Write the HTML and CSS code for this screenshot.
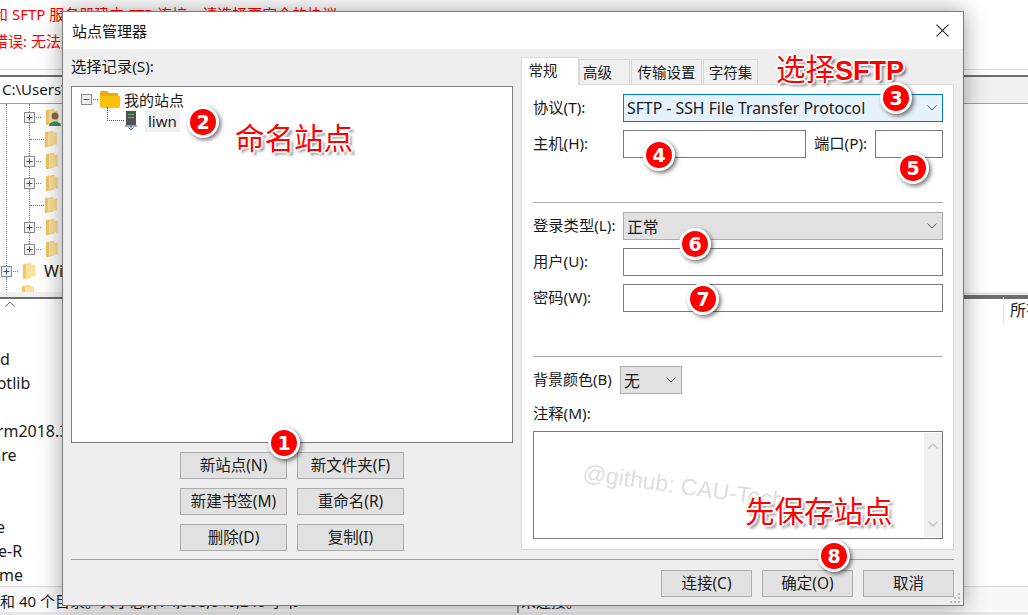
FILE: index.html
```html
<!DOCTYPE html>
<html lang="zh-CN">
<head>
    <meta charset="UTF-8">
    <meta name="viewport" content="width=device-width, initial-scale=1.0">
    <title>站点管理器</title>
    <link rel="stylesheet" href="styles.css">
</head>
<body>

<svg class="defs" width="0" height="0">
    <symbol id="folder-closed" viewBox="0 0 13 18">
        <path d="M0 2 L9 0 L9 16 L1 18 L0 17 Z" fill="#f6d67e"/>
        <path d="M3 2 H13 V15 H3 Z" fill="#fbe09a"/>
        <path d="M0 2 L3 1 L3 16 L1 18 L0 17 Z" fill="#efc564"/>
    </symbol>
    <symbol id="plus-box" viewBox="0 0 11 11">
        <rect x=".5" y=".5" width="10" height="10" fill="#f1f1f1" stroke="#8a8a8a"/>
        <path d="M2.5 5.5 H8.5 M5.5 2.5 V8.5" stroke="#2f4f9a" fill="none"/>
    </symbol>
    <symbol id="chevron" viewBox="0 0 10 6">
        <path d="M.5 .5 L5 5 L9.5 .5" fill="none" stroke="#555"/>
    </symbol>
</svg>

<div class="screen">

    <!-- main window behind the dialog -->
    <div class="log">
        <p>和 SFTP 服务器建立 FTP 连接，请选择更安全的协议</p>
        <p class="log-second">错误: 无法连接到服务器</p>
    </div>
    <div class="addressbar"><span class="path">C:\Users\</span></div>

    <div class="tree-behind">
        <div class="row lvl2">
            <svg class="plus"><use href="#plus-box"/></svg><i class="dots"></i>
            <svg class="bgfolder"><use href="#folder-closed"/></svg>
            <svg class="person" viewBox="0 0 12 14"><circle cx="6" cy="4" r="3.5" fill="#8c6a4a"/><path d="M0 14 C0 8 12 8 12 14 Z" fill="#3d8f6b"/></svg>
        </div>
        <div class="row lvl2 noplus"><i class="dots long"></i><svg class="bgfolder"><use href="#folder-closed"/></svg></div>
        <div class="row lvl2"><svg class="plus"><use href="#plus-box"/></svg><i class="dots"></i><svg class="bgfolder"><use href="#folder-closed"/></svg></div>
        <div class="row lvl2"><svg class="plus"><use href="#plus-box"/></svg><i class="dots"></i><svg class="bgfolder"><use href="#folder-closed"/></svg></div>
        <div class="row lvl2 noplus"><i class="dots long"></i><svg class="bgfolder"><use href="#folder-closed"/></svg></div>
        <div class="row lvl2"><svg class="plus"><use href="#plus-box"/></svg><i class="dots"></i><svg class="bgfolder"><use href="#folder-closed"/></svg></div>
        <div class="row lvl2"><svg class="plus"><use href="#plus-box"/></svg><i class="dots"></i><svg class="bgfolder"><use href="#folder-closed"/></svg></div>
        <div class="row lvl1"><svg class="plus"><use href="#plus-box"/></svg><i class="dots"></i><svg class="bgfolder"><use href="#folder-closed"/></svg><span class="rowtext">Windows</span></div>
        <div class="row lvl1 noplus"><svg class="bgfolder"><use href="#folder-closed"/></svg></div>
    </div>

    <div class="split"><svg class="sort-up" viewBox="0 0 10 6"><path d="M.5 5.5 L5 1 L9.5 5.5" fill="none" stroke="#777"/></svg></div>
    <div class="filelist">
        <p class="cut">d</p>
        <p class="cut">matplotlib</p>
        <p class="cut">&nbsp;</p>
        <p class="cut">PyCharm2018.3</p>
        <p class="cut">Software</p>
        <p class="cut">&nbsp;</p>
        <p class="cut">&nbsp;</p>
        <p class="cut">e</p>
        <p class="cut">e-R</p>
        <p class="cut">me</p>
    </div>
    <div class="right-behind-top"></div>
    <div class="right-behind-head"><span>所有</span></div>
    <div class="statusbar">
        <span class="status-left">和 40 个目录。大小总计: 4,968,646,240 字节</span>
        <span class="status-right">未连接。</span>
    </div>

    <!-- site manager dialog -->
    <div class="dialog">
        <div class="titlebar">
            <span>站点管理器</span>
            <svg class="close" viewBox="0 0 12 12"><path d="M.5 .5 L11.5 11.5 M11.5 .5 L.5 11.5" stroke="#222" fill="none"/></svg>
        </div>

        <div class="main">
            <div class="left">
                <div class="left-label">选择记录(S):</div>
                <div class="sitetree">
                    <div class="node">
                        <svg class="minus" viewBox="0 0 11 11"><rect x=".5" y=".5" width="10" height="10" fill="#eee" stroke="#8a8a8a"/><path d="M2.5 5.5 H8.5" stroke="#2f4f9a"/></svg>
                        <i class="dots"></i>
                        <svg class="openfolder" viewBox="0 0 20 17"><path d="M0 2 Q0 0 2 0 H7 L9 2 H18 V6 H0 Z" fill="#e6ac14"/><path d="M0 5 H20 V15 Q20 17 18 17 H2 Q0 17 0 15 Z" fill="#ffc107"/></svg>
                        <span>我的站点</span>
                    </div>
                    <div class="node child">
                        <i class="elbow"></i>
                        <svg class="server" viewBox="0 0 12 20"><rect x="1" y="0" width="10" height="14" fill="#4f544f"/><rect x="3" y="3" width="6" height="1" fill="#52c26a"/><rect x="3" y="6" width="6" height="1" fill="#52c26a"/><rect x="0" y="14" width="12" height="2" fill="#a5a5a5"/><path d="M6 13 V19 M3.500 16.500 L6 19 L8.500 16.500" stroke="#2f7fd0" fill="none"/></svg>
                        <span class="selected">liwn</span>
                    </div>
                </div>
                <div class="treebuttons">
                    <button class="btn">新站点(N)</button>
                    <button class="btn">新文件夹(F)</button>
                    <button class="btn">新建书签(M)</button>
                    <button class="btn">重命名(R)</button>
                    <button class="btn">删除(D)</button>
                    <button class="btn">复制(I)</button>
                </div>
            </div>

            <div class="right">
                <div class="tabs">
                    <span class="tab active">常规</span>
                    <span class="tab t2">高级</span>
                    <span class="tab t3">传输设置</span>
                    <span class="tab t4">字符集</span>
                </div>
                <div class="panel">
                    <div class="formrow">
                        <label>协议(T):</label>
                        <div class="combo focus"><span>SFTP - SSH File Transfer Protocol</span><svg class="arrow"><use href="#chevron"/></svg></div>
                    </div>
                    <div class="formrow">
                        <label>主机(H):</label>
                        <div class="field host"></div>
                        <label class="portlabel">端口(P):</label>
                        <div class="field port"></div>
                    </div>
                    <hr class="sep">
                    <div class="formrow">
                        <label>登录类型(L):</label>
                        <div class="combo"><span>正常</span><svg class="arrow"><use href="#chevron"/></svg></div>
                    </div>
                    <div class="formrow">
                        <label>用户(U):</label>
                        <div class="field"></div>
                    </div>
                    <div class="formrow">
                        <label>密码(W):</label>
                        <div class="field"></div>
                    </div>
                    <hr class="sep">
                    <div class="formrow bgrow">
                        <label>背景颜色(B)</label>
                        <div class="combo small"><span>无</span><svg class="arrow"><use href="#chevron"/></svg></div>
                    </div>
                    <div class="notes-label">注释(M):</div>
                    <div class="notes">
                        <div class="scroll">
                            <svg class="sc" viewBox="0 0 10 6"><path d="M.5 5.5 L5 1 L9.5 5.5" fill="none" stroke="#c4c4c4" stroke-width="1.400"/></svg>
                            <svg class="sc" viewBox="0 0 10 6"><path d="M.5 .5 L5 5 L9.5 .5" fill="none" stroke="#c4c4c4" stroke-width="1.400"/></svg>
                        </div>
                    </div>
                </div>
            </div>
        </div>

        <hr class="footer-line">
        <div class="footer">
            <button class="btn wide">连接(C)</button>
            <button class="btn wide">确定(O)</button>
            <button class="btn wide">取消</button>
        </div>
        <svg class="grip" viewBox="0 0 12 12"><path d="M9 1h2v2H9zM5 5h2v2H5zM9 5h2v2H9zM1 9h2v2H1zM5 9h2v2H5zM9 9h2v2H9z" fill="#bbb"/></svg>
    </div>

    <!-- tutorial marks on top of the screenshot -->
    <div class="watermark">@github: CAU-Tech</div>

    <div class="note n-name">命名站点</div>
    <div class="note n-sftp">选择<b>SFTP</b></div>
    <div class="note n-save">先保存站点</div>

    <span class="badge b1">1</span>
    <span class="badge b2">2</span>
    <span class="badge b3">3</span>
    <span class="badge b4">4</span>
    <span class="badge b5">5</span>
    <span class="badge b6">6</span>
    <span class="badge b7">7</span>
    <span class="badge b8">8</span>
</div>

</body>
</html>
```

FILE: styles.css
```css
* {
    box-sizing: border-box;
}
body {
    margin: 0;
    background: #fff;
    font-family: "Noto Sans", "Noto Sans CJK SC", sans-serif;
    font-size: 14px;
    color: #1a1a1a;
}
.defs {
    position: absolute;
}
.screen {
    position: relative;
    width: 1028px;
    height: 615px;
    overflow: hidden;
    background: #fff;
}

/* window behind */
.log {
    height: 70px;
    padding-top: 4px;
    margin-left: -7px;
    color: #f00;
    font-size: 15px;
    border-bottom: 1px solid #dcdcdc;
}
.log p {
    margin: 0;
    line-height: 20px;
    white-space: nowrap;
}
.log .log-second {
    margin-top: 7px;
}
.addressbar {
    height: 29px;
    margin-top: 5px;
    border-top: 2px solid #6e6e6e;
    border-bottom: 1px solid #a0a0a0;
    background: #f0f0f0;
}
.path {
    display: block;
    width: 62px;
    height: 26px;
    overflow: hidden;
    white-space: nowrap;
    line-height: 24px;
    padding-left: 2px;
    background: #fff;
    font-size: 15px;
}
.tree-behind {
    position: relative;
    height: 190px;
    padding-top: 2px;
    overflow: hidden;
}
.tree-behind::before {
    content: "";
    position: absolute;
    left: 6px;
    top: 0;
    height: 186px;
    border-left: 1px dotted #777;
}
.tree-behind::after {
    content: "";
    position: absolute;
    left: 29px;
    top: 0;
    height: 148px;
    border-left: 1px dotted #777;
}
.row {
    display: flex;
    align-items: center;
    height: 22px;
}
.lvl2 {
    padding-left: 24px;
}
.lvl1 {
    padding-left: 1px;
}
.noplus.lvl1 {
    padding-left: 22px;
}
.noplus.lvl2 {
    padding-left: 30px;
}
.plus {
    position: relative;
    width: 11px;
    height: 11px;
    flex: none;
    z-index: 1;
}
.dots {
    display: block;
    width: 5px;
    margin: 0 5px 0 1px;
    border-top: 1px dotted #777;
    flex: none;
}
.dots.long {
    width: 14px;
    margin: 0 1px 0 0;
}
.bgfolder {
    width: 12px;
    height: 18px;
    flex: none;
}
.person {
    width: 12px;
    height: 14px;
    margin-left: -9px;
    margin-top: 4px;
}
.rowtext {
    margin-left: 9px;
    font-size: 16px;
    white-space: nowrap;
}
.split {
    position: relative;
    height: 7px;
    margin-top: -2px;
    background: #f0f0f0;
    border-bottom: 2px solid #6e6e6e;
}
.sort-up {
    position: absolute;
    left: 5px;
    top: 9px;
    width: 10px;
    height: 6px;
}
/* names run under the dialog and off the window's left edge, only the tail shows */
.filelist {
    height: 288px;
    padding-top: 48px;
    width: 62px;
    overflow: hidden;
    font-size: 16px;
}
.cut {
    margin: 0;
    height: 24px;
    line-height: 24px;
    white-space: nowrap;
}
.filelist p:nth-child(2) { margin-left: -47px; }
.filelist p:nth-child(4) { margin-left: -50px; }
.filelist p:nth-child(5) { margin-left: -50px; }
.filelist p:nth-child(8) { margin-left: -4px; }
.filelist p:nth-child(9) { margin-left: -2px; }
.filelist p:nth-child(10) { margin-left: -1px; }
.right-behind-top {
    position: absolute;
    left: 960px;
    top: 104px;
    right: 0;
    height: 190px;
    border-bottom: 1px solid #e2e2e2;
}
.right-behind-head {
    position: absolute;
    left: 960px;
    right: 0;
    top: 295px;
    height: 28px;
    border-top: 2px solid #6e6e6e;
    font-size: 16px;
}
.right-behind-head span {
    position: absolute;
    left: 43px;
    top: 0;
    height: 26px;
    padding-left: 6px;
    border-left: 1px solid #e2e2e2;
    white-space: nowrap;
}
.statusbar {
    position: absolute;
    left: 0;
    right: 0;
    top: 586px;
    height: 29px;
    border-top: 1px solid #dcdcdc;
    border-bottom: 3px solid #e6e6e6;
    background: #f8f8f8;
    font-size: 15px;
    line-height: 28px;
}
.status-left {
    position: absolute;
    left: 0;
    white-space: nowrap;
}
.status-right {
    position: absolute;
    left: 517px;
    height: 26px;
    padding-left: 2px;
    border-left: 2px solid #888;
    white-space: nowrap;
}

/* dialog */
.dialog {
    position: absolute;
    left: 62px;
    top: 11px;
    width: 902px;
    height: 595px;
    display: flex;
    flex-direction: column;
    background: #eee;
    border: 1px solid #7a7a7a;
    box-shadow: 0 0 22px rgba(0, 0, 0, 0.38);
    font-size: 15.300px;
}
.titlebar {
    height: 37px;
    flex: none;
    display: flex;
    align-items: center;
    justify-content: space-between;
    padding: 0 14px 0 9px;
    background: #fff;
    font-size: 15px;
    color: #111;
}
.close {
    width: 13px;
    height: 13px;
}
.main {
    display: flex;
    flex: none;
    gap: 8px;
    height: 510px;
    padding-left: 8px;
}
.left {
    width: 442px;
}
.left-label {
    height: 20px;
    line-height: 20px;
    margin-top: 7px;
    margin-bottom: 10px;
}
.sitetree {
    height: 357px;
    padding: 2px 0 0 9px;
    background: #fff;
    border: 1px solid #7f7f7f;
    font-size: 15px;
}
.node {
    display: flex;
    align-items: center;
    height: 21px;
}
.minus {
    width: 11px;
    height: 11px;
}
.openfolder {
    width: 20px;
    height: 17px;
    margin-left: -3px;
    margin-right: 4px;
}
.node.child {
    height: 22px;
    padding-left: 26px;
    position: relative;
}
.elbow {
    width: 17px;
    height: 14px;
    margin-top: -14px;
    border-left: 1px dotted #555;
    border-bottom: 1px dotted #555;
}
.server {
    width: 12px;
    height: 20px;
    margin-left: 1px;
    margin-right: 8px;
}
.selected {
    display: block;
    padding: 0 3px;
    height: 22px;
    line-height: 22px;
    font-size: 15px;
    background: #f0f0f0;
}
.treebuttons {
    display: grid;
    grid-template-columns: 107px 107px;
    grid-auto-rows: 27px;
    gap: 9px 10px;
    margin: 9px 0 0 109px;
}
.btn {
    padding: 0 0 2px;
    background: #e1e1e1;
    border: 1px solid #adadad;
    font: inherit;
    font-size: 15.500px;
    color: #1a1a1a;
}
.right {
    width: 433px;
}
.tabs {
    display: flex;
    align-items: flex-end;
    height: 35px;
    font-size: 14.500px;
}
.tab {
    height: 25px;
    line-height: 24px;
    text-align: center;
    background: #f0f0f0;
    border: 1px solid #d9d9d9;
    border-bottom: none;
    margin-right: 1px;
}
.tab.active {
    position: relative;
    width: 58px;
    height: 28px;
    margin-right: 0;
    margin-bottom: -1px;
    padding-right: 14px;
    background: #fff;
    z-index: 1;
}
.t2 {
    width: 51px;
    padding-right: 14px;
}
.t3 {
    width: 71px;
}
.t4 {
    width: 55px;
}
.panel {
    height: 466px;
    padding: 9px 10px 0 11px;
    background: #fff;
    border: 1px solid #d9d9d9;
}
.formrow {
    display: flex;
    align-items: center;
    height: 28px;
    margin-bottom: 8px;
}
.formrow label {
    flex: none;
    width: 90px;
    padding-bottom: 4px;
}
.formrow .portlabel {
    width: 69px;
    padding-left: 8px;
}
.field {
    flex: 1;
    height: 28px;
    border: 1px solid #7a7a7a;
    background: #fff;
}
.field.host {
    flex: none;
    width: 183px;
}
.field.port {
    flex: none;
    width: 68px;
}
.combo {
    flex: 1;
    height: 28px;
    display: flex;
    align-items: center;
    justify-content: space-between;
    padding: 0 5px 0 3px;
    background: #e1e1e1;
    border: 1px solid #adadad;
    font-size: 15.800px;
}
.combo.focus {
    background: #e5f1fb;
    border-color: #0078d7;
}
.combo.small {
    flex: none;
    width: 62px;
}
.arrow {
    width: 10px;
    height: 6px;
}
.sep {
    margin: 44px 0 9px;
    border: none;
    border-top: 1px solid #a9a9a9;
}
.bgrow {
    margin-bottom: 0;
}
.bgrow label {
    width: 87px;
    font-size: 15px;
}
.notes-label {
    height: 20px;
    line-height: 20px;
    margin: 9px 0 8px;
}
.notes {
    height: 108px;
    display: flex;
    justify-content: flex-end;
    border: 1px solid #7a7a7a;
    background: #fff;
}
.scroll {
    width: 18px;
    margin: 1px 0;
    display: flex;
    flex-direction: column;
    justify-content: space-between;
    align-items: center;
    padding: 10px 0;
    background: #f0f0f0;
}
.sc {
    width: 10px;
    height: 6px;
}
.footer-line {
    flex: none;
    margin: 0 9px 0 8px;
    border: none;
    border-top: 1px solid #a0a0a0;
}
.footer {
    display: flex;
    justify-content: flex-end;
    gap: 10px;
    padding: 10px 9px 0 0;
}
.btn.wide {
    width: 91px;
    height: 27px;
}
.grip {
    position: absolute;
    right: 2px;
    bottom: 1px;
    width: 12px;
    height: 12px;
}

/* tutorial marks */
.watermark {
    position: absolute;
    left: 583px;
    top: 459px;
    font-family: "Liberation Sans", sans-serif;
    font-size: 23px;
    color: rgba(190, 190, 190, 0.5);
    transform: rotate(8deg);
    transform-origin: left center;
    white-space: nowrap;
}
.note {
    position: absolute;
    color: #f00;
    font-family: "Noto Sans CJK SC", sans-serif;
    font-size: 29.500px;
    line-height: 36px;
    white-space: nowrap;
    text-shadow: 1px 1px 0 #fff, -1px -1px 0 #fff, 1px -1px 0 #fff, -1px 1px 0 #fff,
        2px 0 1px #fff, -2px 0 1px #fff, 0 2px 1px #fff, 0 -2px 1px #fff,
        3px 3px 3px rgba(0, 0, 0, 0.55);
}
.note b {
    font-family: "Liberation Sans", sans-serif;
    font-size: 27px;
}
.n-name {
    left: 235px;
    top: 118px;
}
.n-sftp {
    left: 776px;
    top: 49px;
}
.n-save {
    left: 745px;
    top: 491px;
}
.badge {
    position: absolute;
    width: 32px;
    height: 32px;
    display: flex;
    align-items: center;
    justify-content: center;
    margin: -16px 0 0 -16px;
    background: #f00;
    border: 3px solid #fff;
    border-radius: 50%;
    box-shadow: 2px 2px 4px rgba(0, 0, 0, 0.55);
    color: #fff;
    font-family: "DejaVu Sans", sans-serif;
    font-size: 19px;
    font-weight: bold;
}
.b1 { left: 284px; top: 443px; }
.b2 { left: 203px; top: 122px; }
.b3 { left: 896px; top: 98px; }
.b4 { left: 659px; top: 155px; }
.b5 { left: 913px; top: 168px; }
.b6 { left: 695px; top: 244px; }
.b7 { left: 703px; top: 299px; }
.b8 { left: 834px; top: 556px; }
```
